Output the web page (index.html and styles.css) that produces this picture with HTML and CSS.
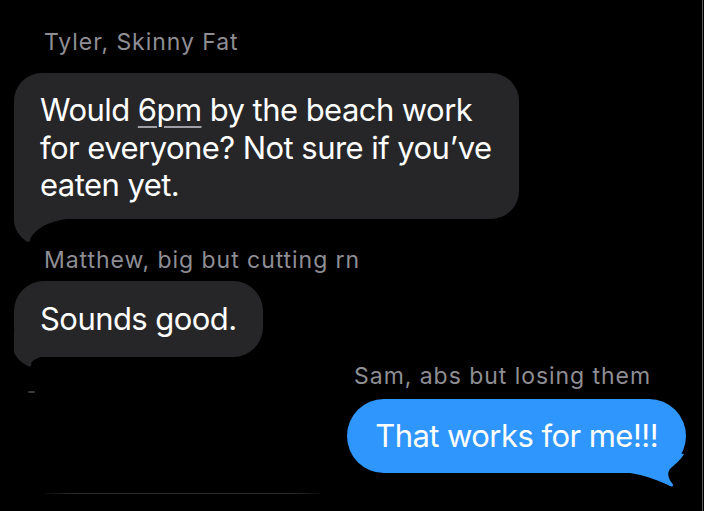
FILE: index.html
```html
<!DOCTYPE html>
<html lang="en">
<head>
    <meta charset="UTF-8">
    <meta name="viewport" content="width=device-width, initial-scale=1.0">
    <title>Group chat</title>
    <link rel="stylesheet" href="styles.css">
</head>
<body>
    <div class="chat">
        <!-- Tyler -->
        <div class="sender sender-first">Tyler, Skinny Fat</div>
        <div class="bubble bubble-in bubble-big">
            Would <span class="link">6pm</span> by the beach work<br>
            for everyone? Not sure if you’ve<br>
            eaten yet.
            <svg class="tail tail-big" width="60" height="56" viewBox="0 0 60 56">
                <path d="M0,0 L0,32 C1,40 6,47 12,51 C15,53 17,51 16,49 C22,38 34,32 52,29 L52,15 Z" />
            </svg>
        </div>

        <!-- Matthew -->
        <div class="sender sender-second">Matthew, big but cutting rn</div>
        <div class="bubble bubble-in bubble-short">
            Sounds good.
            <svg class="tail tail-small" width="40" height="40" viewBox="0 0 40 40">
                <path d="M0,0 L0,22 C2,28 8,33 14,36 C17,37.5 18,35 17,33 C20,29 26,26 38,25 L38,10 Z" />
            </svg>
        </div>

        <!-- Sam (me) -->
        <div class="row-out">
            <div class="stray"></div>
            <div class="out-group">
                <div class="sender sender-me">Sam, abs but losing them</div>
                <div class="bubble bubble-out">
                    That works for me!!!
                    <svg class="tail tail-out" width="60" height="44" viewBox="0 0 60 44">
                        <path d="M4,14 L4,28 C19,30 34,36 44,41 C47,42.5 48,40 46,38 C42,33 41,28 44,24 C48,20 54,16 58,9 L34,4 Z" />
                    </svg>
                </div>
            </div>
        </div>

        <div class="divider"></div>
    </div>
</body>
</html>
```

FILE: styles.css
```css
body {
    margin: 0;
    background: #000;
    font-family: Inter, "Noto Sans", sans-serif;
    color: #fff;
}
.chat {
    width: 702px;
    height: 483px;
    padding-top: 28px;
    border-right: 1px solid #5c5c5e;
    overflow: hidden;
}
.sender {
    font-size: 23px;
    line-height: 28px;
    letter-spacing: 0.95px;
    color: #8e8e94;
    padding-left: 44px;
}
.sender-second {
    margin-top: 27px;
}
.sender-me {
    padding-left: 0;
    margin-right: 51px;
    text-align: right;
}
.bubble {
    position: relative;
    font-size: 31px;
    line-height: 37.5px;
    letter-spacing: -0.55px;
    border-radius: 30px;
}
.bubble-in {
    display: inline-block;
    background: #262628;
    margin-left: 14px;
}
.bubble-in .tail path {
    fill: #262628;
}
.bubble-big {
    margin-top: 17px;
    padding: 18px 27px 15px 26px;
    border-radius: 28px;
}
.bubble-short {
    margin-top: 7px;
    padding: 19px 26px 19.5px 26px;
}
.link {
    text-decoration: underline;
    text-decoration-color: #a0a0a6;
    text-decoration-thickness: 2px;
    text-underline-offset: 5px;
}
.tail {
    position: absolute;
    display: block;
}
.tail-big {
    left: 0;
    bottom: -27px;
}
.tail-small {
    left: 0;
    bottom: -13px;
}
.row-out {
    display: flex;
    justify-content: space-between;
    align-items: flex-start;
    margin-top: 5px;
}
.stray {
    width: 7px;
    height: 2px;
    margin: 29px 0 0 28px;
    background: #3a3a3c;
    border-radius: 1px;
}
.out-group {
    display: flex;
    flex-direction: column;
    align-items: flex-end;
}
.bubble-out {
    margin-top: 9px;
    margin-right: 16px;
    padding: 18px 28px 18.5px 28px;
    background: #2e96fd;
    border-radius: 37px;
}
.bubble-out .tail path {
    fill: #2e96fd;
}
.tail-out {
    right: 0;
    top: 46px;
}
.divider {
    width: 275px;
    height: 1px;
    margin: 20px 0 0 45px;
    background: linear-gradient(to right, #0a0a0a, #2a2a2a 10%, #2a2a2a 90%, #0a0a0a);
}
```
